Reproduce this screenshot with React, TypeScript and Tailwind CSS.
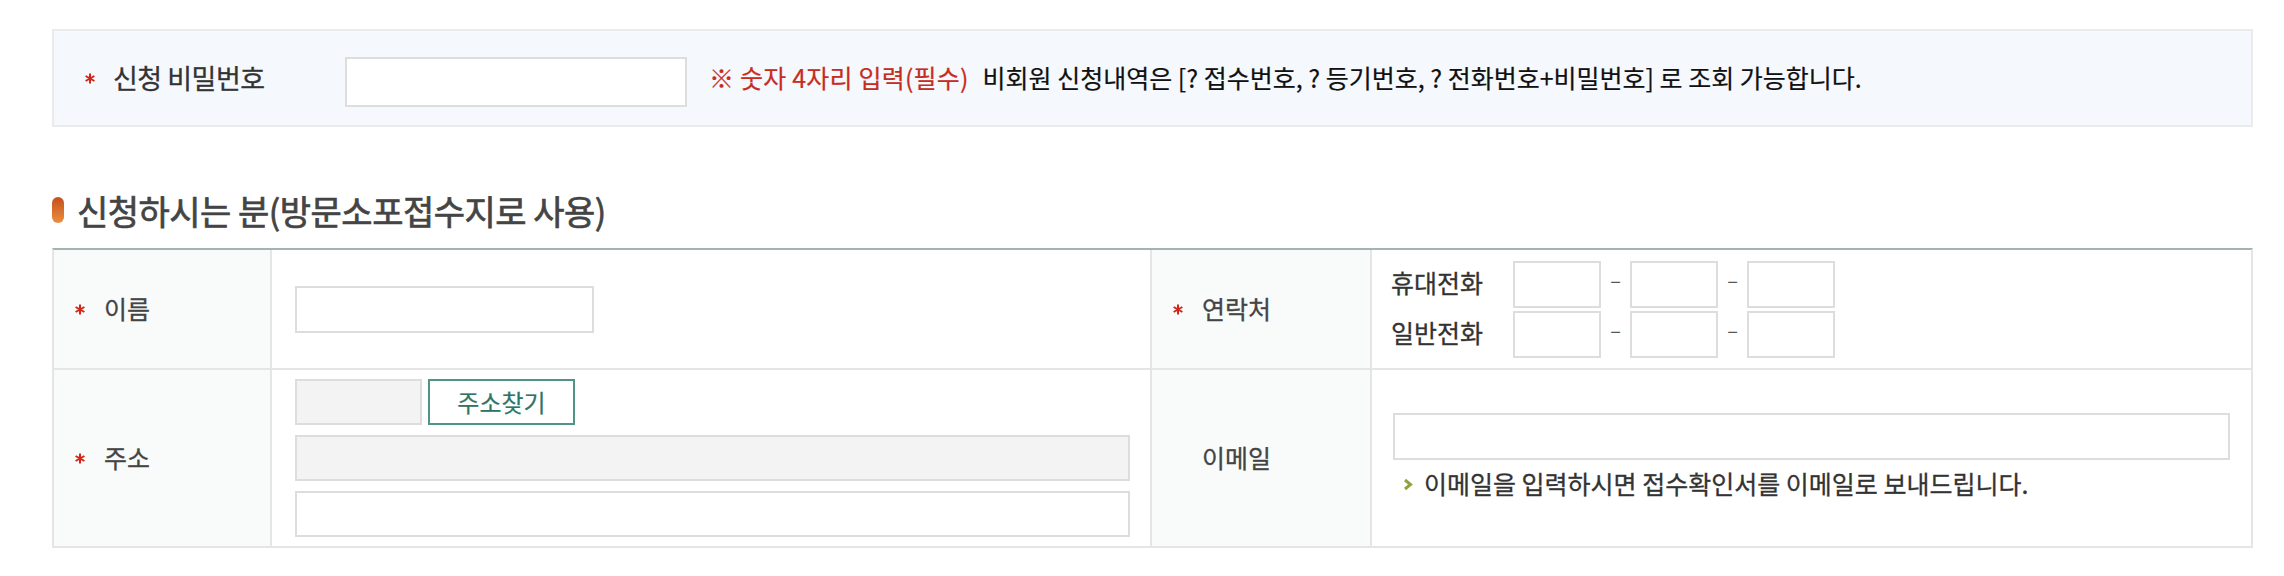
import React from 'react';

const font = { fontFamily: '"Noto Sans CJK KR", "Noto Sans", sans-serif' };

const Star: React.FC<{ hidden?: boolean }> = ({ hidden }) => (
  <svg width="10" height="11" viewBox="0 0 10 11" className={hidden ? 'invisible shrink-0' : 'shrink-0'}>
    <g stroke="#d2261b" strokeWidth="2">
      <line x1="5" y1="0.5" x2="5" y2="10.5" />
      <line x1="0.6" y1="3" x2="9.4" y2="8" />
      <line x1="0.6" y1="8" x2="9.4" y2="3" />
    </g>
  </svg>
);

const Label: React.FC<{ text: string; required?: boolean; h: string }> = ({ text, required, h }) => (
  <div className={`flex items-center pl-[21px] bg-[#f9fafa] border-r-2 border-b-2 border-[#e5e5e5] ${h}`}>
    <Star hidden={!required} />
    <span className="ml-[19px] text-[25px] text-[#444444] [-webkit-text-stroke:0.3px]">{text}</span>
  </div>
);

const App: React.FC = () => {
  return (
    <div className="bg-white min-h-[576px] pl-[52px] pr-[31px] pt-[29px]" style={font}>
      {/* 신청 비밀번호 */}
      <div className="flex items-center h-[98px] border-2 border-[#ebebeb] bg-[#f5f8fc] pl-[31px]">
        <div className="flex items-center w-[260px] shrink-0">
          <Star />
          <span className="ml-[18px] text-[27px] text-[#333333] tracking-[-0.5px] [-webkit-text-stroke:0.3px]">신청 비밀번호</span>
        </div>
        <input type="password" className="w-[342px] h-[50px] mt-[8px] bg-white border-2 border-[#dddddd] outline-none" />
        <span className="ml-[22px] text-[25px] text-[#c62d1f] tracking-[0.2px] [-webkit-text-stroke:0.2px]">※ 숫자 4자리 입력(필수)</span>
        <span className="ml-[14px] text-[25px] text-[#111111] [-webkit-text-stroke:0.2px]">
          비회원 신청내역은 [? 접수번호, ? 등기번호, ? 전화번호+비밀번호] 로 조회 가능합니다.
        </span>
      </div>

      {/* 제목 */}
      <div className="flex items-center h-[40px] mt-[63px] mb-[18px]">
        <div className="w-[12px] h-[26px] rounded-[6px] bg-gradient-to-b from-[#c4501c] to-[#ec8e3e]" />
        <h2 className="ml-[13px] text-[34px] text-[#444444] font-normal tracking-[-0.5px] [-webkit-text-stroke:0.7px]">
          신청하시는 분(방문소포접수지로 사용)
        </h2>
      </div>

      {/* 신청인 정보 */}
      <div className="grid grid-cols-[218px_880px_220px_1fr] border-t-2 border-t-[#a2b3b3] border-l-2 border-r-2 border-[#e5e5e5]">
        <Label text="이름" required h="h-[120px]" />
        <div className="flex items-center pl-[23px] border-r-2 border-b-2 border-[#e5e5e5] h-[120px]">
          <input type="text" className="w-[299px] h-[47px] border-2 border-[#dddddd] outline-none" />
        </div>
        <Label text="연락처" required h="h-[120px]" />
        <div className="flex flex-col justify-center gap-[3px] pl-[19px] pt-[1px] border-b-2 border-[#e5e5e5] h-[120px]">
          {['휴대전화', '일반전화'].map((t) => (
            <div key={t} className="flex items-center">
              <span className="w-[122px] text-[25px] text-[#333333] -mt-[4px] [-webkit-text-stroke:0.3px]">{t}</span>
              <input type="text" className="w-[88px] h-[47px] border-2 border-[#dddddd] outline-none" />
              <span className="w-[29px] text-center text-[20px] text-[#555555] -mt-[10px]">–</span>
              <input type="text" className="w-[88px] h-[47px] border-2 border-[#dddddd] outline-none" />
              <span className="w-[29px] text-center text-[20px] text-[#555555] -mt-[10px]">–</span>
              <input type="text" className="w-[88px] h-[47px] border-2 border-[#dddddd] outline-none" />
            </div>
          ))}
        </div>

        <Label text="주소" required h="h-[178px]" />
        <div className="flex flex-col justify-center gap-[10px] pl-[23px] pr-[20px] border-r-2 border-b-2 border-[#e5e5e5] h-[178px]">
          <div className="flex gap-[6px]">
            <input type="text" readOnly className="w-[127px] h-[46px] bg-[#f3f3f3] border-2 border-[#dddddd] outline-none" />
            <button className="w-[147px] h-[46px] bg-white border-2 border-[#4f9487] text-[24px] text-[#2f7566] [-webkit-text-stroke:0.2px]">
              주소찾기
            </button>
          </div>
          <input type="text" readOnly className="w-full h-[46px] bg-[#f3f3f3] border-2 border-[#dddddd] outline-none" />
          <input type="text" className="w-full h-[46px] bg-white border-2 border-[#dddddd] outline-none" />
        </div>
        <Label text="이메일" h="h-[178px]" />
        <div className="flex flex-col justify-center pl-[21px] pr-[21px] border-b-2 border-[#e5e5e5] h-[178px]">
          <input type="email" className="w-full h-[47px] border-2 border-[#dddddd] outline-none" />
          <div className="flex items-center mt-[5px] pl-[10px]">
            <svg width="10" height="13" viewBox="0 0 10 13" className="shrink-0">
              <path d="M2 2 L7.5 6.5 L2 11" fill="none" stroke="#8ea43c" strokeWidth="3" />
            </svg>
            <span className="ml-[11px] text-[25px] text-[#333333] [-webkit-text-stroke:0.3px]">
              이메일을 입력하시면 접수확인서를 이메일로 보내드립니다.
            </span>
          </div>
        </div>
      </div>
    </div>
  );
};

export default App;
